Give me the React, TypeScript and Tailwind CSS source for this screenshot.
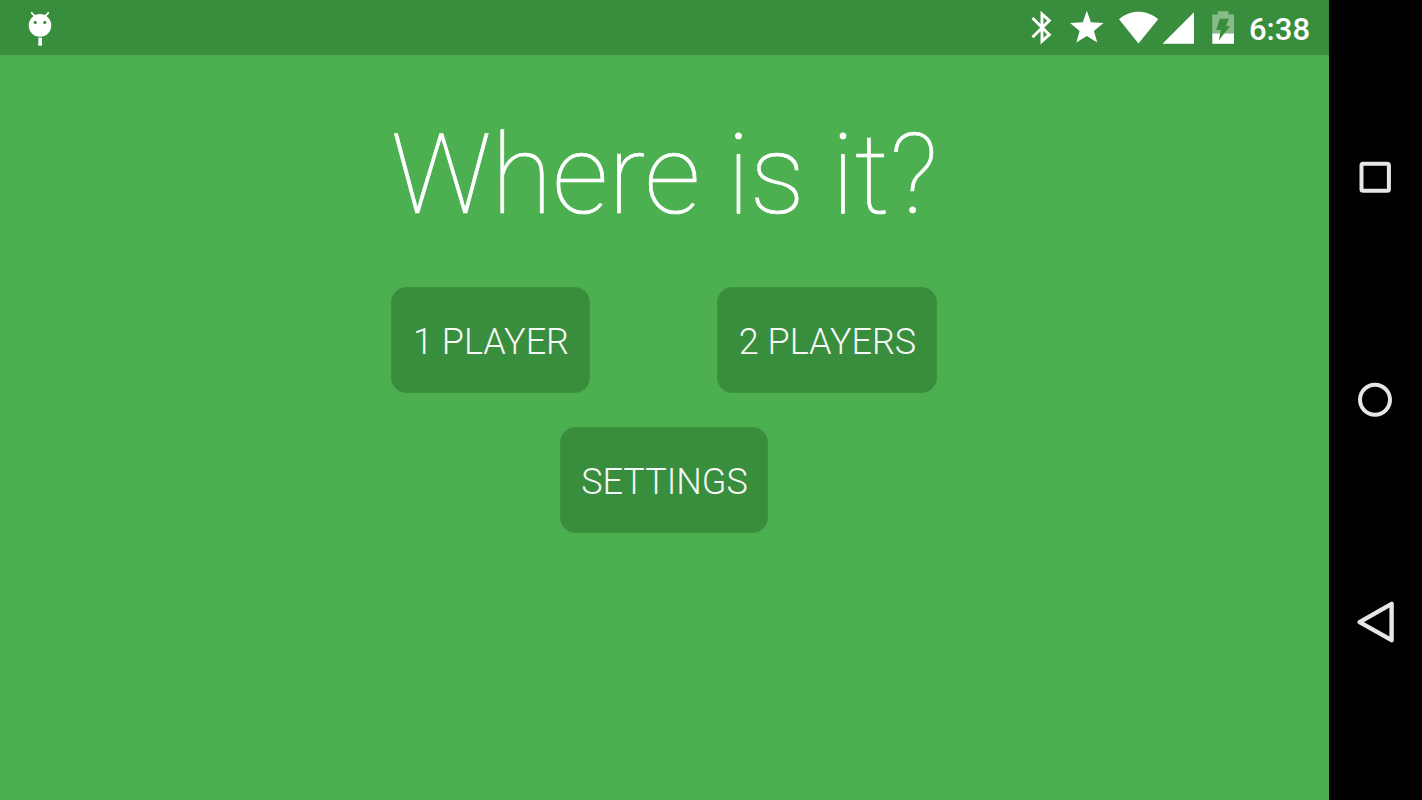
function BugIcon() {
  return (
    <svg viewBox="0 0 24 36" fill="white" className="h-9 w-6" aria-hidden>
      <path d="M3.7 2.8 L6.8 6.2 M20.3 2.8 L17.2 6.2" stroke="white" strokeWidth="1.8" strokeLinecap="round" />
      <circle cx="12" cy="15.4" r="11.3" />
      <circle cx="7.2" cy="12.4" r="1.6" fill="#388e3c" />
      <circle cx="16.8" cy="12.4" r="1.6" fill="#388e3c" />
      <path d="M10.3 27.7h3.7v8h-3.7z" />
    </svg>
  );
}

function StatusIcons() {
  return (
    <svg viewBox="0 0 216 55" fill="white" className="h-[55px] w-[216px]" aria-hidden>
      {/* bluetooth */}
      <path
        d="M12.5 18 L29.3 34.6 L22 41.2 V14 L29.3 20.6 L12.5 37.2"
        fill="none"
        stroke="white"
        strokeWidth="2.9"
      />
      {/* star */}
      <path d="M66.8 10.7 L70.9 22.3 L83.5 22.9 L73.9 30.9 L77.3 42.6 L66.8 36 L56.4 42.6 L59.6 30.9 L50 22.9 L62.8 22.3 Z" />
      {/* wifi */}
      <path d="M118.5 43.5 L99 19.2 C110 9.2 127 9.2 138.2 19.2 Z" />
      {/* signal */}
      <path d="M142.5 43.8 L174 12.3 V43.8 Z" />
      {/* battery */}
      <path d="M197.8 11.3h10.6v3.2h5.6v19.3h-21.7v-19.3h5.5z" opacity=".4" />
      <path d="M192.3 33.5h21.7v10.3h-21.7z" />
      <path d="M199.8 18.8h9.2l-3.2 7.1h4.2l-11.2 14.6 2-10.6h-4.6z" fill="#388e3c" />
    </svg>
  );
}

function MenuButton({ label, className }: { label: string; className: string }) {
  return (
    <button
      type="button"
      className={`h-[106px] rounded-[15px] border border-[#3c943f] bg-[#388e3c] pt-1 pl-px text-[36px] leading-[42px] font-light whitespace-nowrap text-[#f7f7f7] ${className}`}
    >
      {label}
    </button>
  );
}

function NavBar() {
  return (
    <nav className="flex h-full w-[93px] flex-col items-center justify-between bg-black py-[155px]">
      <svg viewBox="0 0 46 46" fill="none" stroke="#e6e6e6" strokeWidth="4" className="size-[46px]" aria-hidden>
        <rect x="8.5" y="8.8" width="27.4" height="27" rx="1.6" />
      </svg>
      <svg viewBox="0 0 46 46" fill="none" stroke="#e6e6e6" strokeWidth="4" className="size-[46px]" aria-hidden>
        <circle cx="22" cy="22.7" r="15" />
      </svg>
      <svg viewBox="0 0 46 46" fill="none" stroke="#e6e6e6" strokeWidth="4.4" strokeLinejoin="round" className="size-[46px]" aria-hidden>
        <path d="M6.6 23.1 L38.6 4.9 V41.2 Z" />
      </svg>
    </nav>
  );
}

export default function App() {
  return (
    <div className="flex h-[800px] w-[1422px] overflow-hidden bg-[#4caf50] font-['Roboto',sans-serif]">
      <div className="flex flex-1 flex-col">
        <header className="flex h-[55px] items-center bg-[#388e3c] pl-7">
          <BugIcon />
          <div className="ml-auto flex items-center pr-[19px]">
            <StatusIcons />
            <span className="ml-[13px] w-[61px] pt-[5px] text-[31px] leading-9 font-medium whitespace-nowrap text-white">
              6:38
            </span>
          </div>
        </header>
        <main className="flex flex-col items-center pt-[55px] pr-px">
          <h1 className="pl-px text-[111px] leading-[130px] font-thin whitespace-nowrap text-white [-webkit-text-stroke:0.7px_white]">
            Where is it?
          </h1>
          <div className="mt-[47px] flex w-[546px] justify-between">
            <MenuButton label="1 PLAYER" className="w-[199px]" />
            <MenuButton label="2 PLAYERS" className="w-[220px]" />
          </div>
          <MenuButton label="SETTINGS" className="mt-[34px] w-[208px]" />
        </main>
      </div>
      <NavBar />
    </div>
  );
}
